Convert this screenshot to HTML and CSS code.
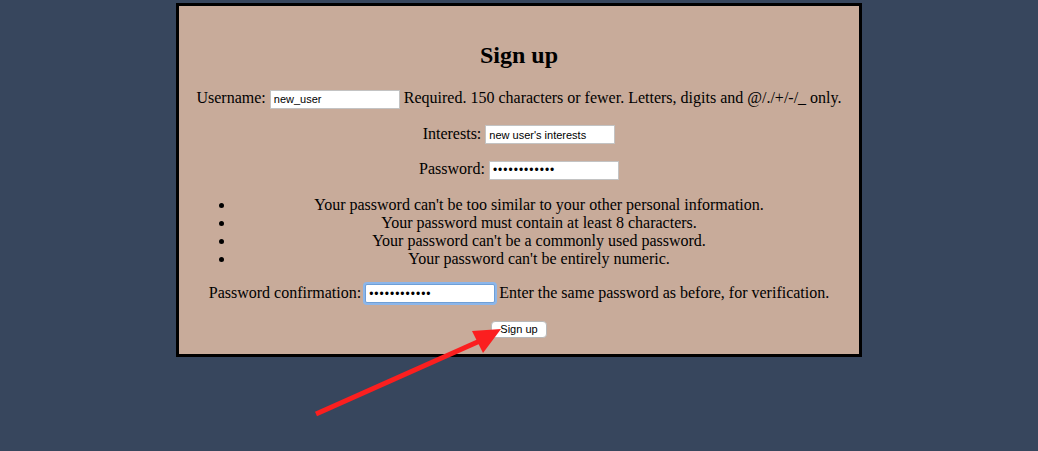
FILE: index.html
```html
<!DOCTYPE html>
<html lang="en">
<head>
<meta charset="utf-8">
<title>Sign up</title>
<link rel="stylesheet" href="styles.css">
</head>
<body>
<div class="card">
  <h2 class="title">Sign up</h2>
  <form class="form">
    <p class="row nowrap">Username: <input class="field" type="text" value="new_user"> Required. 150 characters or fewer. Letters, digits and @/./+/-/_ only.</p>
    <p class="row">Interests: <input class="field" type="text" value="new user's interests"></p>
    <p class="row">Password: <input class="field secret" type="password" value="abcdefghijkl"></p>
    <ul class="rules">
      <li>Your password can't be too similar to your other personal information.</li>
      <li>Your password must contain at least 8 characters.</li>
      <li>Your password can't be a commonly used password.</li>
      <li>Your password can't be entirely numeric.</li>
    </ul>
    <p class="row">Password confirmation: <input class="field secret focused" type="password" value="abcdefghijkl"> Enter the same password as before, for verification.</p>
    <p class="row"><button class="btn" type="button">Sign up</button></p>
  </form>
</div>
<svg class="arrow" width="1038" height="451" viewBox="0 0 1038 451" xmlns="http://www.w3.org/2000/svg">
  <line x1="316" y1="414" x2="482" y2="340" stroke="#fb1f1f" stroke-width="5"/>
  <polygon points="501,329 472,331 483,353" fill="#fb1f1f"/>
</svg>
</body>
</html>
```

FILE: styles.css
```css
html, body {
  margin: 0;
  padding: 0;
}
body {
  background: #37465d;
  font-family: "Liberation Serif", "Times New Roman", serif;
  font-size: 16px;
  color: #000;
  position: relative;
  min-height: 451px;
}
.card {
  box-sizing: border-box;
  width: 66%;
  margin: 3px auto 0;
  border: 3px solid #000;
  background: #c8ab9a;
  padding: 16px 16px 0;
  text-align: center;
}
.title {
  font-size: 24px;
  font-weight: bold;
  margin: 20px 0;
}
.form {
  margin: 0;
}
.row {
  margin: 16px 0;
}
.nowrap {
  white-space: nowrap;
}
.field {
  box-sizing: border-box;
  width: 130px;
  height: 19px;
  border: 1px solid #c3c3c3;
  background: #fff;
  padding: 0 3px;
  font-family: "Liberation Sans", Arial, sans-serif;
  font-size: 11px;
  color: #000;
  outline: none;
}
.secret {
  font-size: 12px;
  letter-spacing: 1px;
}
.focused {
  border: 1px solid #6f9fd6;
  box-shadow: 0 0 0 2px #8cb6ea;
  border-radius: 2px;
}
.rules {
  margin: 16px 0;
  padding-left: 40px;
}
.btn {
  box-sizing: border-box;
  height: 17px;
  padding: 0 8px;
  border: 1px solid #b9b9b9;
  border-radius: 4px;
  background: #fff;
  font-family: "Liberation Sans", Arial, sans-serif;
  font-size: 11px;
  color: #000;
  line-height: 15px;
}
.arrow {
  position: absolute;
  left: 0;
  top: 0;
  pointer-events: none;
}
```
